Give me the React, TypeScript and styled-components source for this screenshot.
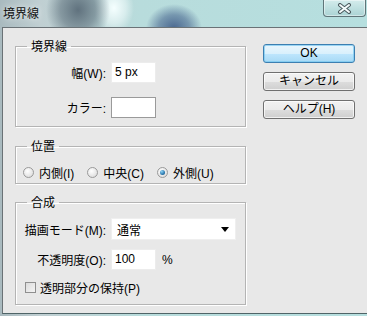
import styled, { createGlobalStyle } from 'styled-components'

const GlobalStyle = createGlobalStyle`
  html, body {
    margin: 0;
    padding: 0;
  }
  body {
    font-family: "Liberation Sans", "Noto Sans CJK JP", sans-serif;
    font-size: 12px;
    color: #000;
  }
`

const Window = styled.div`
  width: 367px;
  height: 316px;
  display: flex;
  flex-direction: column;
  overflow: hidden;
  background:
    radial-gradient(ellipse 28px 24px at 174px 28px, rgba(75, 105, 145, 1) 0%, rgba(75, 105, 145, 0.6) 55%, rgba(75, 105, 145, 0) 100%),
    radial-gradient(ellipse 32px 34px at 78px 10px, rgba(96, 114, 126, 1) 0%, rgba(96, 114, 126, 0.6) 55%, rgba(96, 114, 126, 0) 100%),
    radial-gradient(ellipse 20px 26px at 114px 8px, rgba(245, 255, 255, 1) 0%, rgba(245, 255, 255, 0.5) 60%, rgba(245, 255, 255, 0) 100%),
    linear-gradient(90deg, #a9babf 0, #c0cfd2 40px, #b8dcdc 140px, #b6dfdf 100%);
`

const TitleBar = styled.div`
  height: 27px;
  flex-shrink: 0;
  display: flex;
  align-items: flex-start;
  justify-content: space-between;
  padding-left: 3px;
`

const Title = styled.span`
  line-height: 26px;
  font-family: "Noto Sans CJK JP", sans-serif;
  font-size: 12px;
  color: #111;
  text-shadow: 0 0 6px rgba(255, 255, 255, 0.9);
`

const CloseButton = styled.div`
  width: 43px;
  height: 17px;
  margin-right: 1px;
  box-sizing: border-box;
  border: 1px solid #5f7579;
  border-top: none;
  border-radius: 0 0 4px 4px;
  background: linear-gradient(180deg, #d4ecec 0%, #bfe0e0 50%, #abd3d4 100%);
  box-shadow: inset 0 0 0 1px rgba(255, 255, 255, 0.45);
  display: flex;
  align-items: center;
  justify-content: center;
`

const Body = styled.div`
  flex: 1;
  margin: 0 0 2px 2px;
  border-top: 1px solid #6a7276;
  border-left: 1px solid #6a7276;
  border-bottom: 1px solid #4f6467;
  background: #e8e8e8;
  display: flex;
`

const LeftColumn = styled.div`
  display: flex;
  flex-direction: column;
  padding: 11px 0 0 12px;
  width: 231px;
`

const Group = styled.fieldset<{ $top: number; $bottom: number; $gap: number }>`
  margin: 0 0 ${p => p.$gap}px 0;
  padding: ${p => p.$top}px 0 ${p => p.$bottom}px 0;
  min-width: 0;
  border: 1px solid #b4b4b4;
  box-shadow: inset 1px 1px 0 #fff, 1px 1px 0 #fff;
`

const Legend = styled.legend`
  margin-left: 11px;
  padding: 0 4px;
  font-family: "Noto Sans CJK JP", sans-serif;
  font-size: 12px;
  line-height: 14px;
`

const FormGrid = styled.div<{ $rowGap: number }>`
  display: grid;
  grid-template-columns: 90px auto;
  column-gap: 5px;
  row-gap: ${p => p.$rowGap}px;
  align-items: center;
`

const Label = styled.span`
  text-align: right;
  white-space: nowrap;
`

const Field = styled.div`
  display: flex;
  align-items: center;
  gap: 6px;
`

const TextBox = styled.div<{ $width: number; $framed?: boolean }>`
  width: ${p => p.$width}px;
  height: 21px;
  box-sizing: border-box;
  background: #fff;
  border: 1px solid ${p => (p.$framed ? '#9a9a9a' : '#ececec')};
  padding-left: 3px;
  line-height: 19px;
  font-size: 12px;
`

const Select = styled.div`
  width: 125px;
  height: 22px;
  box-sizing: border-box;
  background: #fff;
  border: 1px solid #efefef;
  padding: 0 6px 0 5px;
  display: flex;
  align-items: center;
  justify-content: space-between;
`

const Arrow = styled.span`
  width: 0;
  height: 0;
  border-left: 4px solid transparent;
  border-right: 4px solid transparent;
  border-top: 5px solid #000;
  margin-top: 1px;
`

const RadioRow = styled.div`
  display: flex;
  align-items: center;
  gap: 13px;
  padding-left: 7px;
  height: 14px;
`

const Option = styled.label`
  display: flex;
  align-items: center;
  gap: 5px;
  white-space: nowrap;
`

const RadioDot = styled.span<{ $checked?: boolean }>`
  width: 11px;
  height: 11px;
  box-sizing: border-box;
  border-radius: 50%;
  border: 1px solid #9a9a9a;
  background: radial-gradient(circle at 40% 35%, #ffffff 0%, #e2e2e2 70%, #cfcfcf 100%);
  display: flex;
  align-items: center;
  justify-content: center;

  &::after {
    content: '';
    display: ${p => (p.$checked ? 'block' : 'none')};
    width: 5px;
    height: 5px;
    border-radius: 50%;
    background: radial-gradient(circle at 35% 30%, #8fd3f5 0%, #2c7ab0 60%, #164a70 100%);
  }
`

const CheckRow = styled.label`
  display: flex;
  align-items: center;
  gap: 4px;
  padding-left: 9px;
  height: 14px;
  margin-top: 10px;
`

const CheckBox = styled.span`
  width: 11px;
  height: 11px;
  box-sizing: border-box;
  border: 1px solid #8f8f8f;
  background: linear-gradient(135deg, #dcdcdc 0%, #f4f4f4 100%);
`

const ButtonColumn = styled.div`
  display: flex;
  flex-direction: column;
  gap: 9px;
  padding: 16px 0 0 17px;
`

const Button = styled.div<{ $primary?: boolean }>`
  width: 92px;
  height: 19px;
  box-sizing: border-box;
  border-radius: 3px;
  border: 1px solid ${p => (p.$primary ? '#3c7fb1' : '#707070')};
  background: ${p =>
    p.$primary
      ? 'linear-gradient(180deg, #eaf6fd 0%, #d9f0fc 50%, #bee6fd 51%, #a7d9f5 100%)'
      : 'linear-gradient(180deg, #f2f2f2 0%, #ebebeb 50%, #dddddd 51%, #cfcfcf 100%)'};
  box-shadow: inset 0 0 0 1px ${p => (p.$primary ? 'rgba(120, 200, 240, 0.7)' : 'rgba(255, 255, 255, 0.7)')};
  display: flex;
  align-items: center;
  justify-content: center;
  font-size: 12px;
  line-height: 17px;
`

function App() {
  return (
    <>
      <GlobalStyle />
      <Window>
        <TitleBar>
          <Title>境界線</Title>
          <CloseButton>
            <svg width="15" height="11" viewBox="0 0 15 11">
              <path d="M3 2 L12 9 M12 2 L3 9" stroke="#4a5a5e" strokeWidth="4" strokeLinecap="round" />
              <path d="M3 2 L12 9 M12 2 L3 9" stroke="#f4fbfb" strokeWidth="2" strokeLinecap="round" />
            </svg>
          </CloseButton>
        </TitleBar>
        <Body>
          <LeftColumn>
            <Group $top={9} $bottom={8} $gap={12}>
              <Legend>境界線</Legend>
              <FormGrid $rowGap={14}>
                <Label>幅(W):</Label>
                <TextBox $width={45}>5 px</TextBox>
                <Label>カラー:</Label>
                <TextBox $width={45} $framed />
              </FormGrid>
            </Group>
            <Group $top={12} $bottom={4} $gap={11}>
              <Legend>位置</Legend>
              <RadioRow>
                <Option><RadioDot />内側(I)</Option>
                <Option><RadioDot />中央(C)</Option>
                <Option><RadioDot $checked />外側(U)</Option>
              </RadioRow>
            </Group>
            <Group $top={9} $bottom={10} $gap={0}>
              <Legend>合成</Legend>
              <FormGrid $rowGap={9}>
                <Label>描画モード(M):</Label>
                <Select>
                  通常
                  <Arrow />
                </Select>
                <Label>不透明度(O):</Label>
                <Field>
                  <TextBox $width={45}>100</TextBox>
                  %
                </Field>
              </FormGrid>
              <CheckRow>
                <CheckBox />
                透明部分の保持(P)
              </CheckRow>
            </Group>
          </LeftColumn>
          <ButtonColumn>
            <Button $primary>OK</Button>
            <Button>キャンセル</Button>
            <Button>ヘルプ(H)</Button>
          </ButtonColumn>
        </Body>
      </Window>
    </>
  )
}

export default App
